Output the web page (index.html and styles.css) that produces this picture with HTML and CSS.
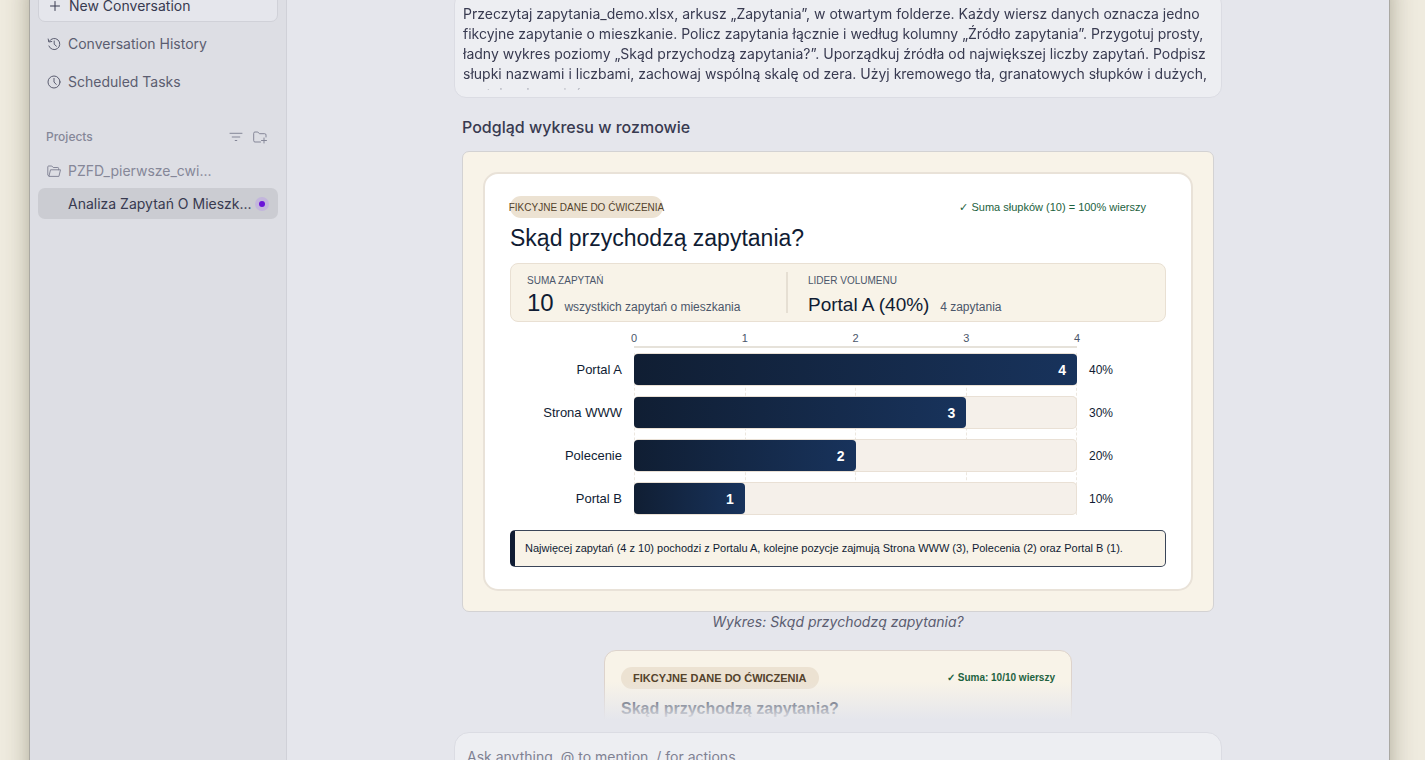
FILE: index.html
```html
<!DOCTYPE html>
<html lang="pl">
<head>
    <meta charset="UTF-8">
    <title>Analiza Zapytań O Mieszkanie</title>
    <link rel="stylesheet" href="styles.css">
</head>
<body>
<div class="window">
    <aside class="sidebar">
        <button class="nav-item new" type="button">
            <svg width="14" height="14" viewBox="0 0 14 14"><path d="M7 2.5v9M2.5 7h9"/></svg>
            New Conversation
        </button>
        <a class="nav-item" href="#">
            <svg width="14" height="14" viewBox="0 0 14 14"><path d="M2.300 4.200A5.600 5.600 0 1 1 1.900 9M1.200 2l.6 3 3-.5M7.200 4v3.200l2.200 2"/></svg>
            Conversation History
        </a>
        <a class="nav-item" href="#">
            <svg width="14" height="14" viewBox="0 0 14 14"><circle cx="7" cy="7" r="6"/><path d="M7 3.4V7l2.2 2.4"/></svg>
            Scheduled Tasks
        </a>

        <div class="projects">
            <h2>Projects</h2>
            <button type="button" aria-label="Filter">
                <svg width="14" height="14" viewBox="0 0 14 14"><path d="M1 3.3h12M3.2 7h7.6M6.2 10.5h1.6"/></svg>
            </button>
            <button type="button" aria-label="Add project">
                <svg width="16" height="14" viewBox="0 0 16 14"><path d="M8.5 12H3a1.3 1.3 0 0 1-1.3-1.3V3.3A1.3 1.3 0 0 1 3 2h2.8l1.6 1.7h5.3A1.3 1.3 0 0 1 14 5v2M12 8v5M9.5 10.5h5"/></svg>
            </button>
        </div>

        <a class="project" href="#">
            <svg width="14" height="14" viewBox="0 0 14 14"><path d="M2 12 .8 11.2V2.800q0-.8.8-.8h3.200l1.400 1.500h4.600q.8 0 .8.800v1.500M2 12l1.500-6.200h10L12 12z"/></svg>
            PZFD_pierwsze_cwi...
        </a>
        <a class="project active" href="#">
            <span>Analiza Zapytań O Mieszk...</span>
            <i class="dot"></i>
        </a>
    </aside>

    <main class="main">
        <div class="thread">
            <div class="message">
                <p>Przeczytaj zapytania_demo.xlsx, arkusz „Zapytania”, w otwartym folderze. Każdy wiersz danych oznacza jedno<br>
                fikcyjne zapytanie o mieszkanie. Policz zapytania łącznie i według kolumny „Źródło zapytania”. Przygotuj prosty,<br>
                ładny wykres poziomy „Skąd przychodzą zapytania?”. Uporządkuj źródła od największej liczby zapytań. Podpisz<br>
                słupki nazwami i liczbami, zachowaj wspólną skalę od zera. Użyj kremowego tła, granatowych słupków i dużych,<br>
                czytelnych napisów.</p>
            </div>

            <h1>Podgląd wykresu w rozmowie</h1>

            <figure class="preview">
                <div class="chart">
                    <div class="chart-top">
                        <span class="tag"><span>FIKCYJNE DANE DO ĆWICZENIA</span></span>
                        <span class="check">✓ Suma słupków (10) = 100% wierszy</span>
                    </div>
                    <h3>Skąd przychodzą zapytania?</h3>

                    <div class="stats">
                        <div class="stat">
                            <small>SUMA ZAPYTAŃ</small>
                            <p><b class="num">10</b> <span>wszystkich zapytań o mieszkania</span></p>
                        </div>
                        <div class="stat">
                            <small>LIDER VOLUMENU</small>
                            <p><b>Portal A (40%)</b> <span>4 zapytania</span></p>
                        </div>
                    </div>

                    <div class="axis">
                        <span>0</span><span>1</span><span>2</span><span>3</span><span>4</span>
                    </div>

                    <div class="bars">
                        <div class="grid"><i></i><i></i><i></i><i></i></div>
                        <div class="row">
                            <span class="name">Portal A</span>
                            <div class="track"><div class="bar" style="width:100%">4</div></div>
                            <span class="pct">40%</span>
                        </div>
                        <div class="row">
                            <span class="name">Strona WWW</span>
                            <div class="track"><div class="bar" style="width:75%">3</div></div>
                            <span class="pct">30%</span>
                        </div>
                        <div class="row">
                            <span class="name">Polecenie</span>
                            <div class="track"><div class="bar" style="width:50%">2</div></div>
                            <span class="pct">20%</span>
                        </div>
                        <div class="row">
                            <span class="name">Portal B</span>
                            <div class="track"><div class="bar" style="width:25%">1</div></div>
                            <span class="pct">10%</span>
                        </div>
                    </div>

                    <p class="note">Najwięcej zapytań (4 z 10) pochodzi z Portalu A, kolejne pozycje zajmują Strona WWW (3), Polecenia (2) oraz Portal B (1).</p>
                </div>
            </figure>
            <p class="caption">Wykres: Skąd przychodzą zapytania?</p>

            <div class="widget">
                <div class="widget-top">
                    <span class="tag">FIKCYJNE DANE DO ĆWICZENIA</span>
                    <span class="check">✓ Suma: 10/10 wierszy</span>
                </div>
                <h3>Skąd przychodzą zapytania?</h3>
            </div>
            <div class="fade"></div>
        </div>

        <textarea class="composer" aria-label="Message" placeholder="Ask anything, @ to mention, / for actions"></textarea>
    </main>
</div>
</body>
</html>
```
FILE: styles.css
```css
*{box-sizing:border-box;}
body,h1,h2,h3,p,figure{margin:0;padding:0;}
body{height:100vh;overflow:hidden;background:#efebdf;font:14px/20px Inter,"Noto Sans",sans-serif;color:#383a50;}
a{color:inherit;text-decoration:none;}
button{font:inherit;color:inherit;border:0;background:none;padding:0;}
svg{fill:none;stroke:currentColor;stroke-width:1;stroke-linecap:round;stroke-linejoin:round;flex:none;}

/* window is taller than the screen, top and bottom run off */
.window{display:flex;height:calc(100vh + 90px);margin:-20px 36px 0 30px;background:#e5e6ec;box-shadow:0 0 0 1px #aaa8a2,0 0 24px rgba(60,55,30,.4);}

/* sidebar */
.sidebar{flex:none;width:257px;padding:10px 8px;background:#dddee4;border-right:1px solid #d0d1d8;}
.nav-item{display:flex;align-items:center;gap:7px;width:100%;height:32px;margin-bottom:6px;padding:0 9px;color:#5b5d70;}
.nav-item.new{background:#e5e6ec;border:1px solid #d0d1d8;border-radius:7px;color:#383a50;}
.projects{display:flex;align-items:center;gap:9px;height:20px;margin:29px 0 8px;padding:0 10px 0 8px;color:#858798;}
.projects h2{flex:1;font-size:12px;font-weight:500;}
.projects button{display:flex;}
.project{display:flex;align-items:center;gap:7px;height:31px;margin-bottom:2px;padding:0 9px;color:#858798;}
.project.active{padding-left:30px;background:#cbccd2;border-radius:7px;color:#383a50;}
.project.active span{flex:1;}
.dot{width:6px;height:6px;border-radius:50%;background:#6a14d8;box-shadow:0 0 0 4px #c3b6dc;margin-right:4px;}

/* conversation */
.main{flex:1;min-width:0;display:flex;flex-direction:column;align-items:center;}
.thread{position:relative;flex:1;min-height:0;width:100%;max-width:768px;padding:12px 8px 0;overflow:hidden;}
.message{margin:0 -8px;padding:11px 8px 7px;background:#edeef2;border:1px solid #dbdce3;border-radius:12px;}
.message p{height:86px;overflow:hidden;white-space:nowrap;-webkit-mask-image:linear-gradient(#000 76px,transparent 89px);mask-image:linear-gradient(#000 76px,transparent 89px);}
h1{margin:17px 0 12px;font-size:16px;line-height:24px;font-weight:500;}
.caption{text-align:center;font-style:italic;color:#5b5d70;}

.preview{padding:20px;background:#f8f3e8;border:1px solid #d3d2d3;border-radius:7px;}
.chart,.widget{font-family:"Liberation Sans",Arial,sans-serif;color:#101c33;}
.chart{padding:22px 25px;background:#fff;border:2px solid #e9e2d8;border-radius:15px;}
.chart-top,.widget-top{display:flex;justify-content:space-between;align-items:center;}
.tag{height:22px;line-height:23px;border-radius:11px;background:#ece2d2;color:#54432c;}
.chart .tag{display:flex;justify-content:center;width:153px;font-size:10px;white-space:nowrap;}
.check{color:#1d6240;font-size:11px;line-height:22px;}
.chart .check{margin-right:20px;}
.chart h3{margin:6px 0 11px;font-size:23px;line-height:28px;font-weight:400;}

.stats{display:flex;height:59px;padding:8px 0;background:#f8f3e8;border:1px solid #e9e0d3;border-radius:8px;}
.stat{padding:2px 0 0 20px;}
.stat:first-child{width:277px;padding-left:16px;border-right:2px solid #e6dfd3;}
.stat small{display:block;font-size:10px;line-height:14px;color:#4b566a;}
.stat p{line-height:30px;font-size:24px;white-space:nowrap;}
.stat span{font-size:12px;color:#4b566a;}
.stat b{margin-right:4px;font-size:19px;font-weight:400;}
.stat .num{font-size:24px;}

.axis{display:flex;justify-content:space-between;margin:9px 89px 5px 124px;height:17px;border-bottom:2px solid #e6e2da;font-size:11px;line-height:14px;color:#4b566a;}
.axis span{display:flex;justify-content:center;width:0;}
.bars{position:relative;display:flex;flex-direction:column;gap:10px;}
.grid{position:absolute;top:0;bottom:0;left:124px;right:89px;display:flex;border-left:1px dashed #ece7df;}
.grid i{flex:1;border-right:1px dashed #ece7df;}
.row{position:relative;display:grid;grid-template-columns:112px 1fr 77px;gap:12px;align-items:center;font-size:13px;}
.name{text-align:right;}
.pct{font-size:12px;}
.track{height:33px;padding:1px 0;background:#f5f0ea;box-shadow:inset 0 0 0 1px #e9e0d5;border-radius:5px;}
.bar{height:31px;padding-right:11px;border-radius:4px;background:linear-gradient(90deg,#101e33,#18335c);color:#fff;font-size:14px;font-weight:700;line-height:32px;text-align:right;}
.note{height:37px;margin-top:15px;padding-left:10px;background:#f8f3e8;border:1px solid #3a4558;border-left:5px solid #101c33;border-radius:5px;font-size:11px;line-height:35px;white-space:nowrap;}

.widget{width:468px;height:200px;margin:18px auto 0;padding:16px;background:#f8f3e8;border:1px solid #ddd3cc;border-radius:12px;font-weight:700;}
.widget .tag{padding:0 12px;font-size:11px;line-height:22px;}
.widget .check{font-size:10px;}
.widget h3{margin-top:9px;font-size:16px;line-height:22px;}
.fade{position:absolute;left:0;right:0;bottom:0;height:40px;background:linear-gradient(rgba(229,230,236,0),#e5e6ec 38px);}

.composer{flex:none;display:block;width:100%;max-width:768px;height:98px;margin-top:10px;padding:14px 12px;border:1px solid #dbdce3;border-radius:15px;background:#edeef2;font:inherit;color:#383a50;resize:none;outline:0;}
.composer::placeholder{color:#7f8192;}
```
